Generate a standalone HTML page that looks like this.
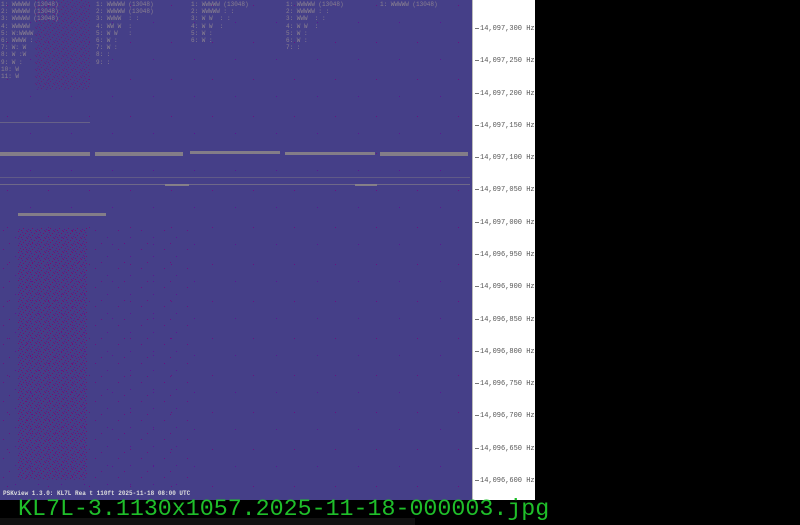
<!DOCTYPE html>
<html><head><meta charset="utf-8"><style>
*{margin:0;padding:0}
body{width:800px;height:525px;background:#000;position:relative;overflow:hidden;font-family:"Liberation Mono",monospace}
#spec{position:absolute;left:0;top:0;width:472px;height:500px;background:#453f88}
#axis{position:absolute;left:472px;top:0;width:62px;height:500px;background:#fff;border-left:1px solid #bbb}
.lab{position:absolute;left:2px;font:7px "Liberation Mono",monospace;color:#555;white-space:nowrap}
.lab:before{content:"";display:inline-block;width:4px;height:1px;background:#777;vertical-align:middle;margin-right:1px}
.s{position:absolute;background:#8a8488;opacity:.9}
.t{position:absolute;font:6px "Liberation Mono",monospace;color:#8a8090;line-height:7.2px;white-space:pre}
#fn{position:absolute;left:18px;top:496px;font:23.3px "Liberation Mono",monospace;color:#1fbf2a;white-space:nowrap}
#bar{position:absolute;left:0;top:518px;width:415px;height:7px;background:#111}
#foot{position:absolute;left:3px;top:490px;font:bold 6px "Liberation Mono",monospace;color:#ddd}
</style></head><body>
<div id="spec">
<svg width="472" height="500" style="position:absolute;left:0;top:0">
<defs>
<pattern id="n1" width="9" height="7" patternUnits="userSpaceOnUse">
<rect x="0" y="0" width="1" height="1" fill="#7a0f6a"/><rect x="4" y="1" width="1" height="1" fill="#5a1890"/>
<rect x="7" y="2" width="1" height="1" fill="#7a0f6a"/><rect x="2" y="3" width="1" height="1" fill="#6a1878"/>
<rect x="5" y="4" width="1" height="1" fill="#7a0f6a"/><rect x="1" y="5" width="1" height="1" fill="#5a1890"/>
<rect x="8" y="6" width="1" height="1" fill="#6a1878"/><rect x="3" y="6" width="1" height="1" fill="#7a0f6a"/>
</pattern>
<pattern id="n2" width="23" height="19" patternUnits="userSpaceOnUse">
<rect x="3" y="2" width="1" height="1" fill="#6a1280"/><rect x="15" y="9" width="1" height="1" fill="#5a1890"/>
<rect x="9" y="15" width="1" height="1" fill="#6a1280"/>
</pattern>
<pattern id="n3" width="41" height="37" patternUnits="userSpaceOnUse">
<rect x="7" y="5" width="1" height="1" fill="#6a1280"/><rect x="30" y="22" width="1" height="1" fill="#5a1890"/>
</pattern>
</defs>
<rect x="0" y="0" width="472" height="500" fill="url(#n3)"/>
<rect x="0" y="225" width="190" height="265" fill="url(#n2)"/>
<rect x="18" y="228" width="70" height="252" fill="url(#n1)"/>
<rect x="95" y="228" width="14" height="252" fill="url(#n2)"/>
<rect x="35" y="0" width="55" height="90" fill="url(#n1)" opacity=".7"/>
</svg>
<div class="s" style="left:0;top:152px;width:90px;height:4px"></div>
<div class="s" style="left:95px;top:152px;width:88px;height:4px"></div>
<div class="s" style="left:190px;top:151px;width:90px;height:3px"></div>
<div class="s" style="left:285px;top:152px;width:90px;height:3px"></div>
<div class="s" style="left:380px;top:152px;width:88px;height:4px"></div>
<div class="s" style="left:18px;top:213px;width:88px;height:3px"></div>
<div class="s" style="left:0;top:184px;width:470px;height:1px;opacity:.6"></div>
<div class="s" style="left:165px;top:184px;width:24px;height:2px"></div>
<div class="s" style="left:355px;top:184px;width:22px;height:2px"></div>
<div class="s" style="left:0;top:177px;width:470px;height:1px;opacity:.4"></div>
<div class="s" style="left:0;top:122px;width:90px;height:1px;opacity:.5"></div>
<div class="t" style="left:1px;top:1px">1: WWWWW (13048)
2: WWWWW (13048)
3: WWWWW (13048)
4: WWWWW 
5: W:WWWW
6: WWWW :
7: W: W
8: W :W
9: W :
10: W
11: W</div>
<div class="t" style="left:96px;top:1px">1: WWWWW (13048)
2: WWWWW (13048)
3: WWWW  : :
4: WW W  :
5: W W   :
6: W :
7: W :
8: :
9: :</div>
<div class="t" style="left:191px;top:1px">1: WWWWW (13048)
2: WWWWW : :
3: W W  : :
4: W W  :
5: W :
6: W :</div>
<div class="t" style="left:286px;top:1px">1: WWWWW (13048)
2: WWWWW : :
3: WWW  : :
4: W W  :
5: W :
6: W :
7: :</div>
<div class="t" style="left:380px;top:1px">1: WWWWW (13048)</div>
<div id="foot">PSKview 1.3.0: KL7L Rea t 110ft 2025-11-18 08:00 UTC</div>
</div>
<div id="axis">
<div class="lab" style="top:25px">14,097,300 Hz</div>
<div class="lab" style="top:57px">14,097,250 Hz</div>
<div class="lab" style="top:90px">14,097,200 Hz</div>
<div class="lab" style="top:122px">14,097,150 Hz</div>
<div class="lab" style="top:154px">14,097,100 Hz</div>
<div class="lab" style="top:186px">14,097,050 Hz</div>
<div class="lab" style="top:219px">14,097,000 Hz</div>
<div class="lab" style="top:251px">14,096,950 Hz</div>
<div class="lab" style="top:283px">14,096,900 Hz</div>
<div class="lab" style="top:316px">14,096,850 Hz</div>
<div class="lab" style="top:348px">14,096,800 Hz</div>
<div class="lab" style="top:380px">14,096,750 Hz</div>
<div class="lab" style="top:412px">14,096,700 Hz</div>
<div class="lab" style="top:445px">14,096,650 Hz</div>
<div class="lab" style="top:477px">14,096,600 Hz</div>
</div>
<div id="bar"></div>
<div id="fn">KL7L-3.1130x1057.2025-11-18-000003.jpg</div>
</body></html>
